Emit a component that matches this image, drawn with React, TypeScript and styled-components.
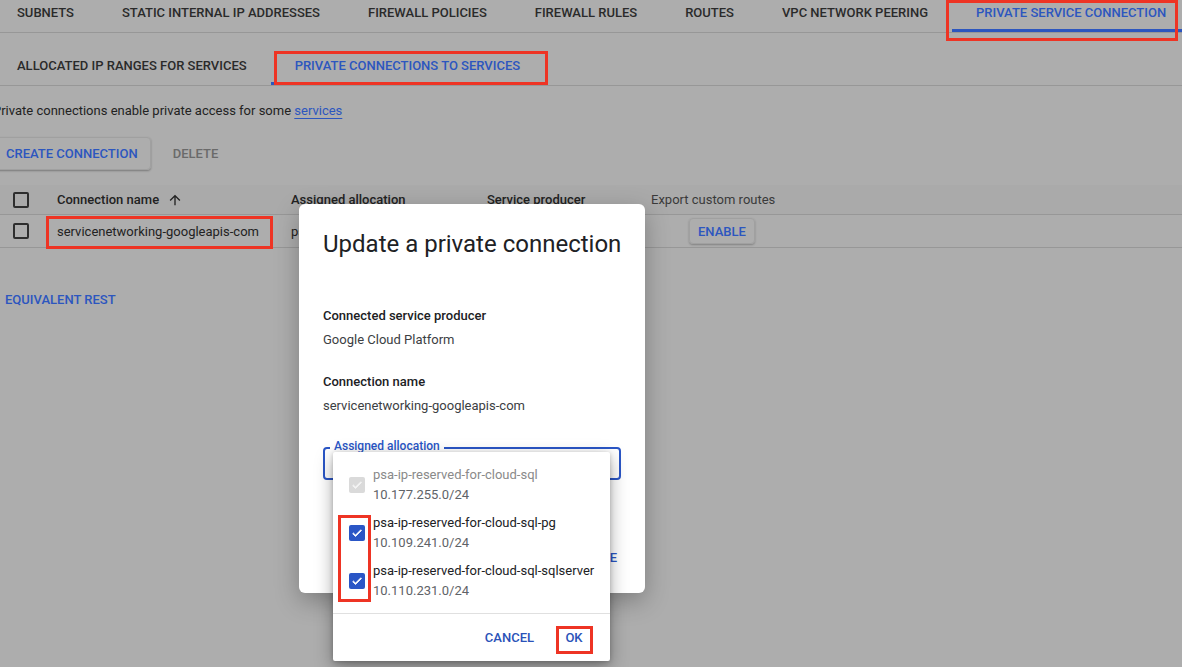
import React from "react";
import styled, { createGlobalStyle } from "styled-components";

const Global = createGlobalStyle`
  html, body { margin: 0; padding: 0; }
  body {
    background: #adadad;
    font-family: Roboto, "Liberation Sans", Arial, sans-serif;
    overflow: hidden;
  }
  * { box-sizing: border-box; }
`;

const PAGE_TEXT = "#222222";
const PAGE_BLUE = "#2c56bf";
const LINE = "#979797";
const BLUE = "#2a56c6";

const Screen = styled.div`
  position: relative;
  width: 1182px;
  height: 667px;
  overflow: hidden;
  background: #adadad;
`;

const Page = styled.div`
  margin: -7px 0 0 -7px;
  width: 1196px;
`;

const TabBar = styled.div<{ $gap?: number }>`
  display: flex;
  height: 40px;
  margin-top: ${(p) => p.$gap ?? 0}px;
  border-bottom: 1px solid ${LINE};
`;

const Tab = styled.div<{ $active?: boolean }>`
  flex-shrink: 0;
  display: flex;
  align-items: center;
  padding: 0 24px;
  height: 39px;
  font-size: 13px;
  font-weight: 500;
  letter-spacing: 0;
  text-transform: uppercase;
  white-space: nowrap;
  color: ${(p) => (p.$active ? PAGE_BLUE : "#2a2a2a")};
  box-shadow: ${(p) => (p.$active ? `inset 0 -3px 0 ${PAGE_BLUE}` : "none")};
`;

const Content = styled.div`
  display: flex;
  flex-direction: column;
`;

const Intro = styled.p`
  margin: 15px 0 0;
  font-size: 13px;
  line-height: 20px;
  color: ${PAGE_TEXT};
`;

const Link = styled.span`
  color: ${PAGE_BLUE};
  text-decoration: underline;
  text-underline-offset: 3px;
`;

const Toolbar = styled.div`
  display: flex;
  align-items: center;
  gap: 10px;
  margin-top: 16px;
  height: 33px;
`;

const RaisedButton = styled.div`
  height: 33px;
  display: flex;
  align-items: center;
  padding: 0 12px;
  font-size: 13px;
  font-weight: 500;
  color: ${PAGE_BLUE};
  border: 1px solid #a0a0a0;
  border-radius: 4px;
  box-shadow: 0 1px 2px rgba(0, 0, 0, 0.3);
  white-space: nowrap;
`;

const TextButton = styled.div<{ $disabled?: boolean }>`
  height: 33px;
  display: flex;
  align-items: center;
  padding: 0 12px;
  font-size: 13px;
  font-weight: 500;
  color: ${(p) => (p.$disabled ? "#6a6a6a" : PAGE_BLUE)};
  white-space: nowrap;
`;

const Table = styled.div`
  margin-top: 15px;
  display: flex;
  flex-direction: column;
`;

const Row = styled.div<{ $head?: boolean }>`
  display: grid;
  grid-template-columns: 64px 234px 196px 164px 1fr;
  align-items: center;
  height: ${(p) => (p.$head ? 30 : 33)}px;
  background: ${(p) => (p.$head ? "#aaaaaa" : "transparent")};
  border-bottom: 1px solid ${LINE};
  font-size: 13px;
  color: ${PAGE_TEXT};
`;

const Cell = styled.div<{ $head?: boolean; $muted?: boolean }>`
  display: flex;
  align-items: center;
  gap: 8px;
  white-space: nowrap;
  font-weight: ${(p) => (p.$head && !p.$muted ? 500 : 400)};
  color: ${(p) => (p.$muted ? "#3a3a3a" : PAGE_TEXT)};
`;

const CheckCell = styled.div`
  padding-left: 20px;
  display: flex;
  align-items: center;
`;

const EmptyBox = styled.div`
  width: 16px;
  height: 16px;
  border: 2px solid #2e2e2e;
  border-radius: 2px;
`;

const EnableButton = styled.div`
  margin-left: 38px;
  height: 26px;
  display: flex;
  align-items: center;
  padding: 0 8px;
  font-size: 13px;
  font-weight: 500;
  color: ${PAGE_BLUE};
  border: 1px solid #a0a0a0;
  border-radius: 4px;
  box-shadow: 0 1px 2px rgba(0, 0, 0, 0.25);
`;

const RestButton = styled(TextButton)`
  margin-top: 33px;
  height: 36px;
  align-self: flex-start;
`;

/* Modal dialog (overlay) */
const Dialog = styled.div`
  position: absolute;
  left: 299px;
  top: 204px;
  width: 346px;
  height: 389px;
  background: #ffffff;
  border-radius: 6px;
  box-shadow: 0 8px 24px rgba(0, 0, 0, 0.28);
  padding: 24px 24px 0;
  display: flex;
  flex-direction: column;
`;

const Title = styled.h2`
  margin: 0;
  font-size: 24px;
  line-height: 32px;
  font-weight: 400;
  color: #202124;
  white-space: nowrap;
`;

const Field = styled.div<{ $gap: number }>`
  margin-top: ${(p) => p.$gap}px;
  display: flex;
  flex-direction: column;
  gap: 4px;
  font-size: 13px;
  line-height: 20px;
`;

const FieldLabel = styled.div`
  font-weight: 500;
  color: #202124;
`;

const FieldValue = styled.div`
  color: #3c4043;
`;

const SelectBox = styled.div`
  position: relative;
  margin-top: 31px;
  height: 33px;
  border: 2px solid ${BLUE};
  border-radius: 4px;
`;

const SelectLabel = styled.span`
  position: absolute;
  left: 5px;
  top: -11px;
  padding: 0 4px;
  background: #fff;
  font-size: 12px;
  line-height: 16px;
  font-weight: 500;
  color: ${BLUE};
`;

const DialogActions = styled.div`
  display: flex;
  justify-content: flex-end;
  margin-top: 68px;
  margin-right: 4px;
  gap: 16px;
`;

const DialogAction = styled.div`
  font-size: 13px;
  font-weight: 500;
  color: ${BLUE};
  line-height: 20px;
`;

/* Dropdown menu (overlay) */
const Menu = styled.div`
  position: absolute;
  left: 333px;
  top: 452px;
  width: 277px;
  height: 209px;
  background: #ffffff;
  border-radius: 2px;
  box-shadow: 0 6px 18px rgba(0, 0, 0, 0.35), 0 1px 4px rgba(0, 0, 0, 0.2);
  display: flex;
  flex-direction: column;
`;

const OptionList = styled.div`
  padding: 9px 0 8px;
  border-bottom: 1px solid #e0e0e0;
`;

const Option = styled.div`
  display: flex;
  align-items: center;
  gap: 8px;
  height: 48px;
  padding: 4px 0 4px 16px;
`;

const Box = styled.div<{ $disabled?: boolean }>`
  width: 16px;
  height: 16px;
  border-radius: 2px;
  background: ${(p) => (p.$disabled ? "#dadada" : BLUE)};
  display: flex;
  align-items: center;
  justify-content: center;
  flex-shrink: 0;
`;

const OptionText = styled.div`
  display: flex;
  flex-direction: column;
  font-size: 13px;
  line-height: 20px;
  white-space: nowrap;
`;

const OptionTitle = styled.div<{ $disabled?: boolean }>`
  color: ${(p) => (p.$disabled ? "#8a8a8a" : "#202124")};
`;

const OptionSub = styled.div`
  color: #5f6368;
`;

const MenuActions = styled.div`
  flex: 1;
  display: flex;
  align-items: center;
  justify-content: flex-end;
  padding-right: 4px;
`;

const MenuButton = styled.div`
  min-width: 64px;
  height: 36px;
  padding: 0 8px;
  display: flex;
  align-items: center;
  justify-content: center;
  font-size: 13px;
  font-weight: 500;
  color: #2a52b8;
`;

const Annotation = styled.div<{ $x: number; $y: number; $w: number; $h: number }>`
  position: absolute;
  left: ${(p) => p.$x}px;
  top: ${(p) => p.$y}px;
  width: ${(p) => p.$w}px;
  height: ${(p) => p.$h}px;
  border: 3px solid #ee3424;
  pointer-events: none;
`;

const Check = ({ color }: { color: string }) => (
  <svg width="12" height="12" viewBox="0 0 24 24">
    <path d="M9 16.2 4.8 12l-1.4 1.4L9 19 21 7l-1.4-1.4L9 16.2z" fill={color} stroke={color} strokeWidth="1.6" />
  </svg>
);

const ArrowUp = () => (
  <svg width="16" height="16" viewBox="0 0 24 24">
    <path d="M4 12l1.41 1.41L11 7.83V20h2V7.83l5.58 5.59L20 12l-8-8-8 8z" fill="#222" />
  </svg>
);

const topTabs = [
  "Subnets",
  "Static internal IP addresses",
  "Firewall policies",
  "Firewall rules",
  "Routes",
  "VPC network peering",
  "Private service connection",
];

const options = [
  { name: "psa-ip-reserved-for-cloud-sql", range: "10.177.255.0/24", disabled: true },
  { name: "psa-ip-reserved-for-cloud-sql-pg", range: "10.109.241.0/24" },
  { name: "psa-ip-reserved-for-cloud-sql-sqlserver", range: "10.110.231.0/24" },
];

export default function App() {
  return (
    <>
      <Global />
      <Screen>
        <Page>
          <TabBar>
            {topTabs.map((t, i) => (
              <Tab key={t} $active={i === topTabs.length - 1}>
                {t}
              </Tab>
            ))}
          </TabBar>
          <TabBar $gap={13}>
            <Tab>Allocated IP ranges for services</Tab>
            <Tab $active>Private connections to services</Tab>
          </TabBar>
          <Content>
            <Intro>
              Private connections enable private access for some <Link>services</Link>
            </Intro>
            <Toolbar>
              <RaisedButton>CREATE CONNECTION</RaisedButton>
              <TextButton $disabled>DELETE</TextButton>
            </Toolbar>
            <Table>
              <Row $head>
                <CheckCell>
                  <EmptyBox />
                </CheckCell>
                <Cell $head>
                  Connection name <ArrowUp />
                </Cell>
                <Cell $head>Assigned allocation</Cell>
                <Cell $head>Service producer</Cell>
                <Cell $head $muted>
                  Export custom routes
                </Cell>
              </Row>
              <Row>
                <CheckCell>
                  <EmptyBox />
                </CheckCell>
                <Cell>servicenetworking-googleapis-com</Cell>
                <Cell>psa-ip-reserved-for-cloud-sql</Cell>
                <Cell>Google Cloud Platform</Cell>
                <Cell>
                  <EnableButton>ENABLE</EnableButton>
                </Cell>
              </Row>
            </Table>
            <RestButton>EQUIVALENT REST</RestButton>
          </Content>
        </Page>

        <Dialog>
          <Title>Update a private connection</Title>
          <Field $gap={46}>
            <FieldLabel>Connected service producer</FieldLabel>
            <FieldValue>Google Cloud Platform</FieldValue>
          </Field>
          <Field $gap={22}>
            <FieldLabel>Connection name</FieldLabel>
            <FieldValue>servicenetworking-googleapis-com</FieldValue>
          </Field>
          <SelectBox>
            <SelectLabel>Assigned allocation</SelectLabel>
          </SelectBox>
          <DialogActions>
            <DialogAction>CANCEL</DialogAction>
            <DialogAction>UPDATE</DialogAction>
          </DialogActions>
        </Dialog>

        <Menu>
          <OptionList>
            {options.map((o) => (
              <Option key={o.name}>
                <Box $disabled={o.disabled}>
                  <Check color={o.disabled ? "#f4f4f4" : "#ffffff"} />
                </Box>
                <OptionText>
                  <OptionTitle $disabled={o.disabled}>{o.name}</OptionTitle>
                  <OptionSub>{o.range}</OptionSub>
                </OptionText>
              </Option>
            ))}
          </OptionList>
          <MenuActions>
            <MenuButton>CANCEL</MenuButton>
            <MenuButton>OK</MenuButton>
          </MenuActions>
        </Menu>

        <Annotation $x={946} $y={0} $w={232} $h={41} />
        <Annotation $x={274} $y={51} $w={274} $h={34} />
        <Annotation $x={46} $y={216} $w={227} $h={33} />
        <Annotation $x={338} $y={515} $w={33} $h={87} />
        <Annotation $x={556} $y={626} $w={37} $h={28} />
      </Screen>
    </>
  );
}
